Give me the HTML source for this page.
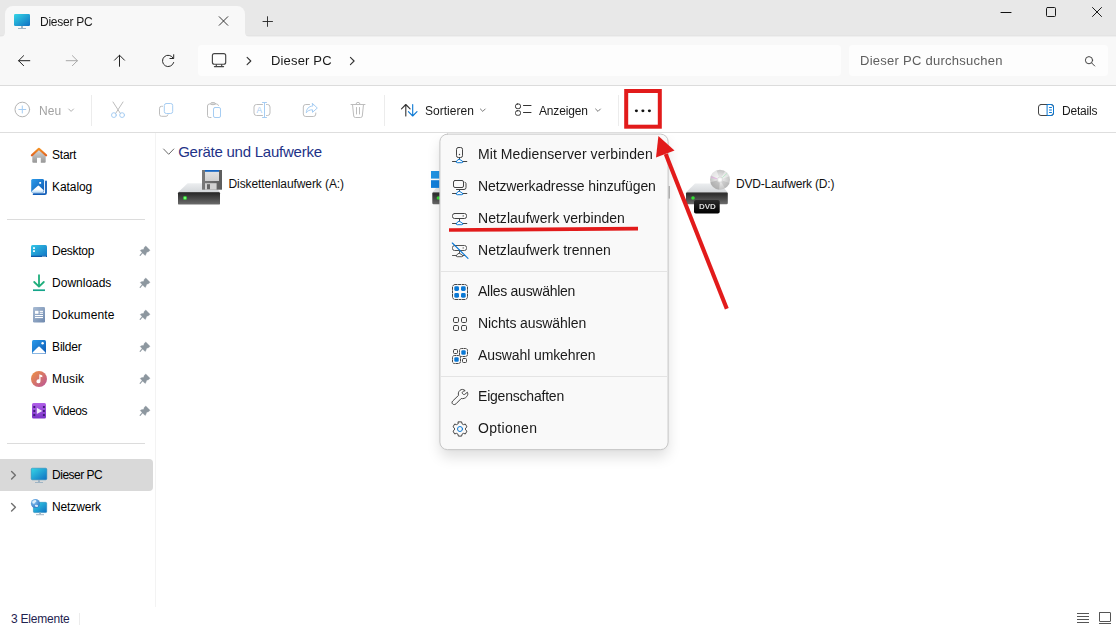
<!DOCTYPE html>
<html lang="de">
<head>
<meta charset="utf-8">
<title>Dieser PC</title>
<style>
html,body{margin:0;padding:0}
body{width:1116px;height:627px;position:relative;overflow:hidden;background:#fff;font-family:"Liberation Sans",sans-serif;color:#1b1b1b}
.a{position:absolute}
.t{position:absolute;white-space:nowrap;font-size:12px;line-height:16px;color:#1a1a1a}
svg{position:absolute;overflow:visible}
#titlebar{left:0;top:0;width:1116px;height:37px;background:linear-gradient(#e8e8e8 0,#e8e8e8 35px,#e4e4e4 35px,#e4e4e4 36px,#efefef 36px)}
#tab{left:5px;top:6px;width:240px;height:31px;background:#f8f8f8;border-radius:8px 8px 0 0}
#nav{left:0;top:37px;width:1116px;height:48px;background:#f8f8f8}
#addr{left:198px;top:45px;width:643px;height:31px;background:#fdfdfd;border-radius:4px}
#search{left:849px;top:45px;width:259px;height:31px;background:#fdfdfd;border-radius:4px}
#tb{left:0;top:85px;width:1116px;height:48px;background:#fff;border-top:1px solid #dcdcdc;border-bottom:1px solid #dedede;box-sizing:border-box}
.vsep{position:absolute;width:1px;background:#ececec}
.side{font-size:12px;color:#000}
.g{will-change:transform}
.mi{will-change:transform;font-size:14px;line-height:20px;left:478.5px;color:#1a1a1a}
#menu{left:440px;top:134px;width:228px;height:315px;box-sizing:border-box;background:#f9f9f9;border-radius:8px;box-shadow:0 8px 14px rgba(0,0,0,.13),0 1px 3px rgba(0,0,0,.05);clip-path:inset(1px -30px -30px -30px)}
.msep{position:absolute;left:440px;width:228px;height:1px;background:#e3e3e3}
</style>
</head>
<body>
<!-- TITLE BAR -->
<div class="a" id="titlebar"></div>
<div class="a" id="tab"></div>
<div class="a" id="nav"></div>
<div class="a" id="addr"></div>
<div class="a" id="search"></div>
<div class="a" id="tb"></div>
<svg width="1116" height="627" viewBox="0 0 1116 627" style="left:0;top:0" fill="none" stroke-linecap="round" stroke-linejoin="round">
<!-- tab flare corners -->
<path d="M0.500 37 L5 37 L5 32.500 A4.500 4.500 0 0 1 0.500 37Z" fill="#f8f8f8" stroke="none"/>
<path d="M249.500 37 L245 37 L245 32.500 A4.500 4.500 0 0 0 249.500 37Z" fill="#f8f8f8" stroke="none"/>
<!-- tab monitor icon -->
<defs>
<linearGradient id="gmon" x1="0" y1="0" x2="1" y2="1"><stop offset="0" stop-color="#35d6e6"/><stop offset="1" stop-color="#0f6fc2"/></linearGradient>
<linearGradient id="gdrv" x1="0" y1="0" x2="0" y2="1"><stop offset="0" stop-color="#555"/><stop offset="0.120" stop-color="#2c2c2c"/><stop offset="1" stop-color="#6c6c6c"/></linearGradient>
<linearGradient id="gdvd" x1="0" y1="0" x2="0" y2="1"><stop offset="0" stop-color="#2a2a2a"/><stop offset="1" stop-color="#000"/></linearGradient>
<linearGradient id="gtop" x1="0" y1="0" x2="0" y2="1"><stop offset="0" stop-color="#eceef0"/><stop offset="1" stop-color="#d4d7da"/></linearGradient>
</defs>
<g id="ic-mon-tab" stroke="none">
<rect x="14" y="14" width="16" height="12" rx="1.2" fill="url(#gmon)"/>
<rect x="21" y="26" width="2" height="2.2" fill="#9fb4c4"/>
<rect x="18" y="28" width="8" height="1" fill="#9fb4c4"/>
</g>
<!-- tab close, plus -->
<path d="M219.200 16.700 L227.800 25.300 M227.800 16.700 L219.200 25.300" stroke="#222" stroke-width="0.900"/>
<path d="M263 21.500 H272.500 M267.500 16.700 V26.400" stroke="#222" stroke-width="0.900"/>
<!-- window controls -->
<path d="M1001 12.500 H1011" stroke="#111" stroke-width="1.150"/>
<rect x="1046.500" y="7.500" width="9" height="9" rx="1" stroke="#1a1a1a" stroke-width="1"/>
<path d="M1092.500 7.500 L1101.500 16.500 M1101.500 7.500 L1092.500 16.500" stroke="#1a1a1a" stroke-width="1"/>
<!-- nav arrows -->
<path d="M29.800 60.700 H18.600 M23.600 55.700 L18.600 60.700 L23.600 65.700" stroke="#222" stroke-width="1"/>
<path d="M66.200 60.700 H77.400 M72.400 55.700 L77.400 60.700 L72.400 65.700" stroke="#a8a8a8" stroke-width="1"/>
<path d="M119.500 66.300 V55.200 M114.500 60.200 L119.500 55.200 L124.500 60.200" stroke="#222" stroke-width="1"/>
<!-- refresh -->
<path d="M173.300 58.300 A5.700 5.700 0 1 0 173.700 62.500" stroke="#2a2a2a" stroke-width="1"/>
<path d="M173.700 54.700 V58.500 H169.900" stroke="#2a2a2a" stroke-width="1"/>
<!-- address monitor -->
<rect x="212.400" y="53.600" width="13.300" height="10.700" rx="2" stroke="#444" stroke-width="1.150"/>
<path d="M216.300 64.500 V66.300 M221.700 64.500 V66.300 M214.400 66.600 H223.600" stroke="#444" stroke-width="1.150"/>
<!-- breadcrumb chevrons -->
<path d="M247.100 57.300 L250.800 61 L247.100 64.700" stroke="#333" stroke-width="1.100"/>
<path d="M350.400 57.300 L354.100 61 L350.400 64.700" stroke="#333" stroke-width="1.100"/>
<!-- search icon -->
<circle cx="1089" cy="60.200" r="3.600" stroke="#444" stroke-width="1"/>
<path d="M1091.600 62.900 L1094.700 66" stroke="#444" stroke-width="1"/>
<!-- TOOLBAR -->
<circle cx="22.300" cy="109.500" r="7.300" stroke="#b4b4b4" stroke-width="1"/>
<path d="M18.800 109.500 H25.800 M22.300 106 V113" stroke="#a6cdf3" stroke-width="1"/>
<path d="M68.700 109 L71.100 111.400 L73.500 109" stroke="#b0b0b0" stroke-width="1"/>
<!-- cut -->
<path d="M113 102 L120.500 113.600 M123 102 L115.500 113.600" stroke="#bdbdbd" stroke-width="1"/>
<circle cx="113.900" cy="115.100" r="2.400" stroke="#a6cdf3" stroke-width="1"/>
<circle cx="122.100" cy="115.100" r="2.400" stroke="#a6cdf3" stroke-width="1"/>
<!-- copy -->
<path d="M162.500 106.300 H161.500 A2 2 0 0 0 159.500 108.300 V114.300 A2 2 0 0 0 161.500 116.300 H166 A2 2 0 0 0 168 114.800" stroke="#bdbdbd" stroke-width="1"/>
<rect x="164.300" y="103.500" width="8.400" height="10" rx="2" stroke="#a6cdf3" stroke-width="1"/>
<!-- paste -->
<path d="M211 117.500 H209.500 A2 2 0 0 1 207.500 115.500 V106 A2 2 0 0 1 209.500 104 H216.500 A2 2 0 0 1 218.500 105.500" stroke="#bdbdbd" stroke-width="1"/>
<ellipse cx="213" cy="103.600" rx="2.600" ry="1.100" stroke="#bdbdbd" stroke-width="1"/>
<rect x="213.500" y="107.500" width="7" height="10" rx="1.500" stroke="#a6cdf3" stroke-width="1"/>
<!-- rename -->
<path d="M262.500 104.500 H256.500 A2.500 2.500 0 0 0 254 107 V113 A2.500 2.500 0 0 0 256.500 115.500 H262.500 M266.500 104.500 H267.500 A2.500 2.500 0 0 1 270 107 V113 A2.500 2.500 0 0 1 267.500 115.500 H266.500" stroke="#bdbdbd" stroke-width="1"/>
<path d="M262.500 102.500 H266.500 M262.500 117.500 H266.500 M264.500 102.500 V117.500" stroke="#a6cdf3" stroke-width="1"/>
<text x="256.600" y="113" font-size="8.500" fill="#a6cdf3" stroke="none" font-family="Liberation Sans, sans-serif">A</text>
<!-- share -->
<path d="M309.500 104.500 H305.800 A2.500 2.500 0 0 0 303.300 107 V114 A2.500 2.500 0 0 0 305.800 116.500 H313.300 A2.500 2.500 0 0 0 315.800 114 V113" stroke="#bdbdbd" stroke-width="1"/>
<path d="M312.500 103.500 L317.300 108 L312.500 112.300 V109.800 C309.500 109.800 307.500 110.800 306.300 112.800 C306.500 109 308.500 106.300 312.500 106 Z" stroke="#a6cdf3" stroke-width="1"/>
<!-- trash -->
<path d="M351 104.500 H365 M356 104.300 A2 2 0 0 1 360 104.300 M352.500 104.500 L353.700 116 A1.700 1.700 0 0 0 355.400 117.500 H360.600 A1.700 1.700 0 0 0 362.300 116 L363.500 104.500 M356.500 107.500 V114 M359.500 107.500 V114" stroke="#bdbdbd" stroke-width="1"/>
<!-- sort -->
<path d="M405.800 116 V104.500 M401.500 108.800 L405.800 104.500 L410.100 108.800" stroke="#333" stroke-width="1.100"/>
<path d="M412.700 104.500 V116 M408.400 111.700 L412.700 116 L417 111.700" stroke="#0a78d4" stroke-width="1.100"/>
<path d="M480.400 109 L482.800 111.400 L485.200 109" stroke="#777" stroke-width="1"/>
<!-- view -->
<rect x="515.500" y="104" width="5" height="4.600" rx="1.800" stroke="#333" stroke-width="1"/>
<rect x="515.500" y="110.700" width="5" height="4.600" rx="1.800" stroke="#333" stroke-width="1"/>
<path d="M523.500 105.500 H531 M523.500 112.500 H531" stroke="#333" stroke-width="1"/>
<path d="M595.600 109 L598 111.400 L600.400 109" stroke="#777" stroke-width="1"/>
<!-- dots -->
<ellipse cx="636.400" cy="110.800" rx="1.550" ry="1.350" fill="#111" stroke="none"/>
<ellipse cx="642.900" cy="110.800" rx="1.550" ry="1.350" fill="#111" stroke="none"/>
<ellipse cx="649.400" cy="110.800" rx="1.550" ry="1.350" fill="#111" stroke="none"/>
<!-- details -->
<rect x="1038.500" y="104.500" width="15" height="11" rx="2.500" stroke="#444" stroke-width="1"/>
<path d="M1047.500 104.500 H1051 A2.500 2.500 0 0 1 1053.500 107 V113 A2.500 2.500 0 0 1 1051 115.500 H1047.500 Z" stroke="#0a78d4" stroke-width="1"/>
<path d="M1049.500 107.500 H1051.500 M1049.500 110 H1051.500 M1049.500 112.500 H1051.500" stroke="#0a78d4" stroke-width="1"/>
<!-- status icons -->
<path d="M1077 613.500 H1089 M1077 616.500 H1089 M1077 619.500 H1089 M1077 622.500 H1089" stroke="#555" stroke-width="1" stroke-linecap="butt"/>
<rect x="1099.500" y="612.500" width="11" height="9" rx="0.300" stroke="#555" stroke-width="1"/>
<path d="M1099 623.500 H1111" stroke="#555" stroke-width="1" stroke-linecap="butt"/>
</svg>
<div class="vsep" style="left:91px;top:95px;height:31px"></div>
<div class="vsep" style="left:384px;top:95px;height:31px"></div>
<div class="vsep" style="left:618px;top:95px;height:31px"></div>
<div class="vsep" style="left:155px;top:133px;height:474px;background:#f3f3f3"></div>
<div class="vsep" style="left:79px;top:613px;height:12px;background:#ececec"></div>

<span class="t" id="t_status" style="left:11.00px;top:610.500px;color:#1f2350;letter-spacing:-0.222px">3 Elemente</span>

<div class="a" style="left:0;top:459px;width:153px;height:32px;background:#d9d9d9;border-radius:0 4px 4px 0"></div>
<div class="a" style="left:7px;top:219px;width:138px;height:1px;background:#dcdcdc"></div>
<div class="a" style="left:7px;top:443px;width:138px;height:1px;background:#dcdcdc"></div>
<svg width="1116" height="627" viewBox="0 0 1116 627" style="left:0;top:0" fill="none">
<defs>
<linearGradient id="ghome" gradientUnits="userSpaceOnUse" x1="0" y1="148" x2="0" y2="156"><stop offset="0" stop-color="#f69524"/><stop offset="1" stop-color="#df5f1f"/></linearGradient>
<linearGradient id="gmount" x1="0" y1="0" x2="0" y2="1"><stop offset="0" stop-color="#ffffff"/><stop offset="0.550" stop-color="#ffffff"/><stop offset="1" stop-color="#bfe0fa"/></linearGradient>
<linearGradient id="ghomeb" x1="0" y1="0" x2="0" y2="1"><stop offset="0" stop-color="#dcdcdc"/><stop offset="1" stop-color="#969696"/></linearGradient>
<linearGradient id="gblue" x1="0" y1="0" x2="1" y2="1"><stop offset="0" stop-color="#2b9bea"/><stop offset="1" stop-color="#0c59b4"/></linearGradient>
<linearGradient id="gdesk" x1="0" y1="0" x2="1" y2="1"><stop offset="0" stop-color="#33c6e6"/><stop offset="1" stop-color="#1273c4"/></linearGradient>
<linearGradient id="gdoc" x1="0" y1="0" x2="1" y2="1"><stop offset="0" stop-color="#a9bcd4"/><stop offset="1" stop-color="#6f89ae"/></linearGradient>
<linearGradient id="gmus" x1="0" y1="0" x2="1" y2="1"><stop offset="0" stop-color="#f0923f"/><stop offset="1" stop-color="#b9559a"/></linearGradient>
<radialGradient id="gglobe" cx="0.350" cy="0.300" r="0.800"><stop offset="0" stop-color="#8cc6f2"/><stop offset="1" stop-color="#2a72c2"/></radialGradient>
<linearGradient id="gvid" x1="0" y1="0" x2="0" y2="1"><stop offset="0" stop-color="#b160e8"/><stop offset="1" stop-color="#7a34c8"/></linearGradient>
</defs>
<!-- home -->
<path d="M32.300 155 L39 148.800 L45.700 155 V161.800 A1 1 0 0 1 44.700 162.800 H40.800 V157.700 H37 V162.800 H33.300 A1 1 0 0 1 32.300 161.800 Z" fill="url(#ghomeb)"/>
<path d="M31.900 155.300 L38.900 148.800 L46.100 155.300" stroke="url(#ghome)" stroke-width="2.200" stroke-linecap="round" stroke-linejoin="round"/>
<!-- katalog -->
<path d="M46 181.400 V193 A1.200 1.200 0 0 1 44.800 194.200 H33.600" stroke="#0f5cb8" stroke-width="1.800" stroke-linecap="round"/>
<rect x="31.200" y="179" width="12.900" height="13.400" rx="1.500" fill="url(#gblue)"/>
<path d="M31.700 191.300 L37.600 185.900 Q38.400 185.300 39.200 185.900 L43.700 190.200 V191 A1.400 1.400 0 0 1 42.300 192.400 H33 A1.400 1.400 0 0 1 31.700 191.300 Z" fill="url(#gmount)"/>
<rect x="39.300" y="182" width="1.800" height="1.800" fill="#fff"/>
<!-- desktop -->
<rect x="31" y="245" width="16" height="12" rx="1.500" fill="url(#gdesk)"/>
<rect x="33" y="247.300" width="2" height="1.600" fill="#fff"/><rect x="33" y="250.300" width="2" height="1.600" fill="#fff"/>
<rect x="31" y="255.700" width="16" height="1.300" fill="#0e5aa8"/>
<rect x="42.500" y="255.900" width="1" height="0.900" fill="#fff"/><rect x="44.500" y="255.900" width="1" height="0.900" fill="#fff"/>
<!-- downloads -->
<path d="M39 275.200 V286.500 M34.200 282 L39 286.700 L43.800 282" stroke="#1fae7c" stroke-width="1.800" stroke-linecap="round" stroke-linejoin="round"/>
<path d="M33 290.200 H45" stroke="#15a58a" stroke-width="1.700" stroke-linecap="butt"/>
<!-- dokumente -->
<rect x="33" y="307" width="12" height="15.600" rx="1.300" fill="url(#gdoc)"/>
<rect x="35" y="310.800" width="3.500" height="3" fill="#fff"/><rect x="39.700" y="310.800" width="3.300" height="1.100" fill="#fff"/><rect x="39.700" y="312.700" width="3.300" height="1.100" fill="#fff"/>
<rect x="35" y="315" width="8" height="1.100" fill="#fff"/><rect x="35" y="317" width="8" height="1.100" fill="#fff"/>
<!-- bilder -->
<rect x="32" y="340" width="14" height="14" rx="1.500" fill="url(#gblue)"/>
<path d="M32.500 352.500 L38.300 346.700 Q39 346.200 39.700 346.700 L45.500 352.500 A1.500 1.500 0 0 1 44.500 353.500 H33.500 A1.500 1.500 0 0 1 32.500 352.500 Z" fill="#fff"/>
<circle cx="42.600" cy="343.300" r="1.200" fill="#fff"/>
<!-- musik -->
<circle cx="39" cy="379" r="8" fill="url(#gmus)"/>
<path d="M39.300 374.300 L42.300 375.500 V377.300 L40.500 376.700 V381.300 A2 2 0 1 1 39.300 379.500 Z" fill="#fff"/>
<!-- videos -->
<rect x="32" y="403" width="14" height="15.600" rx="1.500" fill="url(#gvid)"/>
<path d="M36.800 407.700 L42.300 410.900 L36.800 414.100 Z" fill="#f1e9fb"/>
<g fill="#3f1c78"><rect x="33.3" y="405.9" width="2" height="2" rx="0.300"/><rect x="33.3" y="409.9" width="2" height="2" rx="0.300"/><rect x="33.3" y="414" width="2" height="2" rx="0.300"/><rect x="42.9" y="405.9" width="2" height="2" rx="0.300"/><rect x="42.9" y="409.9" width="2" height="2" rx="0.300"/><rect x="42.9" y="414" width="2" height="2" rx="0.300"/></g>
<!-- dieser pc -->
<rect x="31.200" y="468.200" width="15.600" height="11.600" rx="1.200" fill="url(#gmon)" stroke="#1a80b4" stroke-width="0.500"/>
<rect x="38" y="480" width="2" height="2.200" fill="#9fb4c4"/><rect x="35" y="482" width="8" height="1" fill="#9fb4c4"/>
<!-- netzwerk -->
<rect x="33.400" y="502.300" width="13.300" height="10.300" rx="1.200" fill="url(#gmon)" stroke="#1a80b4" stroke-width="0.500"/>
<rect x="39.200" y="512.600" width="1.800" height="1.800" fill="#9fb4c4"/><rect x="36" y="514.200" width="8" height="1" fill="#9fb4c4"/>
<circle cx="35.400" cy="503.500" r="4.500" fill="url(#gglobe)"/>
<path d="M32.300 501.500 Q33.500 499.800 35.500 500 Q37 500.800 36 502 Q34.800 502.300 34.500 503.500 Q33.500 504 32.300 503 Z" fill="#e8f3fc" opacity="0.900"/>
<path d="M35 505 Q36.500 504.300 38 505.200 Q38.500 506.300 37.300 507 Q35.800 507.200 35 506.300 Z" fill="#e8f3fc" opacity="0.900"/>
<!-- chevrons -->
<path d="M11.600 471.500 L15.400 475.300 L11.600 479.100" stroke="#707070" stroke-width="1.400" stroke-linecap="round" stroke-linejoin="round"/>
<path d="M11.600 503.500 L15.400 507.300 L11.600 511.100" stroke="#707070" stroke-width="1.400" stroke-linecap="round" stroke-linejoin="round"/>
<path d="M145.800 245.900 L150.000 250.200 L148.900 251.500 L146.800 252.300 L145.400 255.500 L144.300 254.800 L140.200 250.500 L141.200 249.800 L143.700 249.200 L144.300 247.300 Z M142.900 252.800 L140.200 255.900 L139.700 255.300 L142.300 252.300 Z" fill="#8d979f" stroke="#8d979f" stroke-width="0.300" stroke-linejoin="round"/>
<path d="M145.800 277.900 L150.000 282.200 L148.900 283.500 L146.800 284.300 L145.400 287.500 L144.300 286.800 L140.200 282.500 L141.200 281.800 L143.700 281.200 L144.300 279.300 Z M142.900 284.800 L140.200 287.900 L139.700 287.300 L142.300 284.300 Z" fill="#8d979f" stroke="#8d979f" stroke-width="0.300" stroke-linejoin="round"/>
<path d="M145.800 309.900 L150.000 314.200 L148.900 315.500 L146.800 316.300 L145.400 319.500 L144.300 318.800 L140.200 314.500 L141.200 313.800 L143.700 313.200 L144.300 311.300 Z M142.900 316.800 L140.200 319.900 L139.700 319.300 L142.300 316.300 Z" fill="#8d979f" stroke="#8d979f" stroke-width="0.300" stroke-linejoin="round"/>
<path d="M145.800 341.900 L150.000 346.200 L148.900 347.500 L146.800 348.300 L145.400 351.500 L144.300 350.800 L140.200 346.500 L141.200 345.800 L143.700 345.200 L144.300 343.300 Z M142.900 348.800 L140.200 351.900 L139.700 351.300 L142.300 348.300 Z" fill="#8d979f" stroke="#8d979f" stroke-width="0.300" stroke-linejoin="round"/>
<path d="M145.800 373.900 L150.000 378.200 L148.900 379.500 L146.800 380.300 L145.400 383.500 L144.300 382.800 L140.200 378.500 L141.200 377.800 L143.700 377.200 L144.300 375.300 Z M142.900 380.800 L140.200 383.900 L139.700 383.300 L142.300 380.300 Z" fill="#8d979f" stroke="#8d979f" stroke-width="0.300" stroke-linejoin="round"/>
<path d="M145.800 405.900 L150.000 410.200 L148.900 411.500 L146.800 412.300 L145.400 415.500 L144.300 414.800 L140.200 410.500 L141.200 409.800 L143.700 409.200 L144.300 407.300 Z M142.900 412.800 L140.200 415.900 L139.700 415.300 L142.300 412.300 Z" fill="#8d979f" stroke="#8d979f" stroke-width="0.300" stroke-linejoin="round"/>
</svg>
<span class="t side" id="s0" style="left:52.10px;top:146.5px;letter-spacing:-0.275px">Start</span>
<span class="t side" id="s1" style="left:52.10px;top:178.5px;letter-spacing:-0.083px">Katalog</span>
<span class="t side" id="s2" style="left:52.10px;top:242.5px;letter-spacing:-0.283px">Desktop</span>
<span class="t side" id="s3" style="left:52.10px;top:274.5px;letter-spacing:-0.012px">Downloads</span>
<span class="t side" id="s4" style="left:52.10px;top:306.5px;letter-spacing:0.113px">Dokumente</span>
<span class="t side" id="s5" style="left:52.10px;top:338.5px;letter-spacing:-0.220px">Bilder</span>
<span class="t side" id="s6" style="left:52.10px;top:370.5px;letter-spacing:0.150px">Musik</span>
<span class="t side" id="s7" style="left:53.10px;top:402.5px;letter-spacing:-0.420px">Videos</span>
<span class="t side" id="s8" style="left:52.10px;top:466.5px;letter-spacing:-0.513px">Dieser PC</span>
<span class="t side" id="s9" style="left:52.10px;top:498.5px;letter-spacing:-0.158px">Netzwerk</span>

<svg width="1116" height="627" viewBox="0 0 1116 627" style="left:0;top:0" fill="none">
<defs>
<radialGradient id="gdisc" cx="0.5" cy="0.5" r="0.5"><stop offset="0" stop-color="#f4f4f4"/><stop offset="0.25" stop-color="#e9e9e9"/><stop offset="1" stop-color="#c4c4c4"/></radialGradient>
<linearGradient id="gflop" x1="0" y1="0" x2="1" y2="0"><stop offset="0" stop-color="#7a7a7a"/><stop offset="1" stop-color="#5c5c5c"/></linearGradient>
<linearGradient id="glabel" x1="0" y1="0" x2="0" y2="1"><stop offset="0" stop-color="#e6e6e6"/><stop offset="1" stop-color="#cfcfcf"/></linearGradient>
</defs>
<!-- group chevron -->
<path d="M163.600 149 L168.700 154.300 L173.800 149" stroke="#6a6a6a" stroke-width="1" stroke-linecap="round" stroke-linejoin="round"/>
<!-- floppy drive -->
<path d="M187.600 183.200 H213 L220 192.200 H178.200 Z" fill="url(#gtop)"/>
<rect x="178" y="192" width="42" height="12.600" rx="1.200" fill="url(#gdrv)"/>
<circle cx="185" cy="198" r="2" fill="#35dd35"/><circle cx="185" cy="198" r="1" fill="#8dff8d"/>
<rect x="202" y="170" width="20" height="19.700" fill="url(#gflop)"/>
<rect x="205" y="170" width="14" height="11" fill="url(#glabel)"/>
<rect x="205" y="170" width="14" height="1.800" fill="#1766c2"/>
<rect x="205" y="183.200" width="11.600" height="6.500" fill="#d2d2d2"/>
<rect x="207" y="184.200" width="3" height="5" fill="#666"/>
<!-- C: drive partially hidden -->
<rect x="431" y="171" width="8.500" height="7.600" fill="#1f93e4"/>
<rect x="431" y="180.200" width="8.500" height="7.700" fill="#1280dc"/>
<path d="M432.300 192.400 L436 188 H440 V192.400 Z" fill="#e4e6e8"/>
<rect x="432.300" y="192.300" width="9" height="12" rx="1.200" fill="url(#gdrv)"/>
<circle cx="438.400" cy="198" r="1.800" fill="#35dd35"/>
<rect x="668.300" y="186" width="1.600" height="12.600" fill="#b2b2b2"/>
<!-- DVD drive -->
<path d="M695 183.400 H720 L727.600 192.300 H686.200 Z" fill="url(#gtop)"/>
<rect x="686" y="192.200" width="41.800" height="12" rx="1.200" fill="url(#gdrv)"/>
<circle cx="720" cy="179.700" r="10" fill="url(#gdisc)"/>
<path d="M720 179.7 L719.13 189.66 A10 10 0 0 1 710.34 182.29 Z" fill="#8e8e8e" opacity="0.400"/>
<path d="M720 179.7 L729.40 183.12 A10 10 0 0 1 725.00 188.36 Z" fill="#9a9a9a" opacity="0.300"/>
<path d="M720 179.7 L710.94 175.47 A10 10 0 0 1 716.58 170.30 Z" fill="#ffffff" opacity="0.500"/>
<path d="M720 179.7 L725.00 171.04 A10 10 0 0 1 729.40 176.28 Z" fill="#ffffff" opacity="0.450"/>
<path d="M717.13 178.82 L710.92 176.92" stroke="#e7a3e4" stroke-width="0.700"/>
<path d="M722.23 177.69 L727.06 173.34" stroke="#a9e8bb" stroke-width="0.700"/>
<circle cx="720" cy="179.700" r="2.700" fill="#f4f4f4" stroke="#c9c9c9" stroke-width="0.500"/>
<circle cx="720" cy="179.700" r="1.200" fill="#fdfdfd"/>
<circle cx="693" cy="198" r="1.800" fill="#35dd35"/>
<rect x="694" y="200" width="25.700" height="13.500" rx="1.800" fill="url(#gdvd)"/>
</svg>
<span class="t" id="c_head" style="left:178.20px;top:142px;font-size:15px;line-height:20px;color:#1e3287;letter-spacing:-0.242px">Geräte und Laufwerke</span>
<span class="t" id="c_a" style="left:228.50px;top:175.500px;color:#111;letter-spacing:-0.085px">Diskettenlaufwerk (A:)</span>
<span class="t" id="c_d" style="left:736.00px;top:175.500px;color:#111;letter-spacing:-0.181px">DVD-Laufwerk (D:)</span>

<span class="t g" id="t_tab" style="left:39.80px;top:14px;letter-spacing:-0.240px">Dieser PC</span>
<span class="t g" id="t_addr" style="left:271.20px;top:51px;font-size:13px;line-height:20px;letter-spacing:0.163px">Dieser PC</span>
<span class="t g" id="t_search" style="left:860.10px;top:51px;font-size:13px;line-height:20px;color:#5e5e5e;letter-spacing:0.265px">Dieser PC durchsuchen</span>
<span class="t g" id="t_neu" style="left:38.80px;top:103px;color:#a2a2a2;letter-spacing:0.050px">Neu</span>
<span class="t g" id="t_sort" style="left:424.60px;top:103px;letter-spacing:0.025px">Sortieren</span>
<span class="t g" id="t_view" style="left:539.40px;top:103px;letter-spacing:-0.171px">Anzeigen</span>
<span class="t g" id="t_det" style="left:1062.20px;top:103px;letter-spacing:-0.183px">Details</span>
<span class="t g" id="t_dvd" style="left:699.10px;top:202.40px;font-size:8px;font-weight:bold;line-height:10px;color:#dcdcdc;letter-spacing:-0.100px">DVD</span>
<div class="a" id="menu"></div>
<svg width="1116" height="627" viewBox="0 0 1116 627" style="left:0;top:0" fill="none" stroke-linecap="round" stroke-linejoin="round">
<rect x="439.900" y="134.100" width="228.200" height="315.500" rx="7.500" fill="#f9f9f9" stroke="#c6c6c6" stroke-width="1"/>
<path d="M440.400 271.500 H667.600 M440.400 376.500 H667.600" stroke="#e4e4e4" stroke-width="1" stroke-linecap="butt"/>
<!-- 1 media server -->
<rect x="456.500" y="147.500" width="6" height="10" rx="1.800" stroke="#444" stroke-width="1"/>
<circle cx="459.500" cy="154.500" r="0.700" fill="#444"/>
<path d="M459.500 157.500 V159.300 M452.500 161.500 H456.300 M462.700 161.500 H466.800" stroke="#444" stroke-width="1"/>
<path d="M459.500 159.300 L462.600 161.300 Q463.300 162.700 461.800 162.700 H457.200 Q455.700 162.700 456.400 161.300 Z" stroke="#0a78d4" stroke-width="1"/>
<!-- 2 network address -->
<rect x="453.500" y="180.500" width="10" height="7" rx="1.500" stroke="#444" stroke-width="1"/>
<path d="M465 182.300 Q466 182.500 466 183.500 V187.500 A2 2 0 0 1 464 189.500 H456.500" stroke="#444" stroke-width="1"/>
<path d="M459.500 189.500 V191.300 M452.500 193.500 H456.300 M462.700 193.500 H466.800" stroke="#444" stroke-width="1"/>
<path d="M459.500 191.300 L462.600 193.300 Q463.300 194.700 461.800 194.700 H457.200 Q455.700 194.700 456.400 193.300 Z" stroke="#0a78d4" stroke-width="1"/>
<!-- 3 map drive -->
<rect x="452.500" y="213.500" width="14" height="5" rx="2" stroke="#444" stroke-width="1"/>
<circle cx="463.200" cy="215.900" r="0.700" fill="#444"/>
<path d="M459.500 218.500 V221.300 M452.500 223.500 H456.300 M462.700 223.500 H466.800" stroke="#444" stroke-width="1"/>
<path d="M459.500 221.300 L462.600 223.300 Q463.300 224.700 461.800 224.700 H457.200 Q455.700 224.700 456.400 223.300 Z" stroke="#0a78d4" stroke-width="1"/>
<!-- 4 disconnect drive -->
<rect x="452.500" y="245.500" width="14" height="5" rx="2" stroke="#555" stroke-width="1"/>
<circle cx="463.200" cy="247.900" r="0.700" fill="#555"/>
<path d="M459.500 250.500 V253.300 M452.500 255.500 H456.300 M462.700 255.500 H464.500" stroke="#555" stroke-width="1"/>
<path d="M459.500 253.300 L462.600 255.300 Q463.300 256.700 461.800 256.700 H457.200 Q455.700 256.700 456.400 255.300 Z" stroke="#555" stroke-width="1"/>
<path d="M452.300 243 L468 258.300" stroke="#0a78d4" stroke-width="1.100"/>
<!-- 5 select all -->
<rect x="452.500" y="284.500" width="15" height="15" rx="2.500" stroke="#444" stroke-width="1" stroke-dasharray="2.200 1.300"/>
<g fill="#0a78d4"><rect x="454.300" y="286.300" width="4.700" height="4.700" rx="1.400"/><rect x="461" y="286.300" width="4.700" height="4.700" rx="1.400"/><rect x="454.300" y="293" width="4.700" height="4.700" rx="1.400"/><rect x="461" y="293" width="4.700" height="4.700" rx="1.400"/></g>
<!-- 6 select none -->
<g stroke="#444" stroke-width="1"><rect x="453.500" y="317.500" width="5" height="5" rx="1.200"/><rect x="461.500" y="317.500" width="5" height="5" rx="1.200"/><rect x="453.500" y="325.500" width="5" height="5" rx="1.200"/><rect x="461.500" y="325.500" width="5" height="5" rx="1.200"/></g>
<!-- 7 invert -->
<g stroke="#444" stroke-width="1"><rect x="453.500" y="349.500" width="4" height="4" rx="1"/><rect x="462.500" y="358.500" width="4" height="4" rx="1"/>
<rect x="459.500" y="348.500" width="8" height="8" rx="1.800" stroke-dasharray="1.800 1.200"/><rect x="452.500" y="355.500" width="8" height="8" rx="1.800" stroke-dasharray="1.800 1.200"/></g>
<g fill="#0a78d4"><rect x="461.300" y="350.300" width="4.400" height="4.400" rx="1.200"/><rect x="454.300" y="357.300" width="4.400" height="4.400" rx="1.200"/></g>
<!-- 8 wrench -->
<path d="M464.900 390.400 C463.500 389 461.300 389.100 459.900 390.400 C458.300 391.800 458 393.800 458.600 395.300 L452.700 401 C451.600 402.200 452 403.500 452.700 404 C453.600 404.800 455 404.800 456 403.800 L461.200 398.500 C463 399 465.500 398.300 466.800 396.500 C468 395 468.100 393.500 467.300 392.200 L464.900 394.300 C464 394.800 462.900 394.400 462.400 393.400 C462 392.600 462.300 391.900 462.900 391.500 Z" stroke="#444" stroke-width="1"/>
<!-- 9 gear -->
<path id="gear" d="M458.36 421.89 L461.64 421.89 L462.01 423.77 L463.52 424.65 L465.34 424.02 L466.98 426.87 L465.53 428.12 L465.53 429.88 L466.98 431.13 L465.34 433.98 L463.52 433.35 L462.01 434.23 L461.64 436.11 L458.36 436.11 L457.99 434.23 L456.48 433.35 L454.66 433.98 L453.02 431.13 L454.47 429.88 L454.47 428.12 L453.02 426.87 L454.66 424.02 L456.48 424.65 L457.99 423.77 Z" stroke="#444" stroke-width="1"/>
<circle cx="460" cy="429" r="2.500" stroke="#0a78d4" stroke-width="1"/>
</svg>
<span class="t mi" id="m0" style="left:478.30px;top:144px;letter-spacing:0.080px">Mit Medienserver verbinden</span>
<span class="t mi" id="m1" style="left:478.30px;top:176px;letter-spacing:-0.108px">Netzwerkadresse hinzufügen</span>
<span class="t mi" id="m2" style="left:478.30px;top:208px;letter-spacing:0.029px">Netzlaufwerk verbinden</span>
<span class="t mi" id="m3" style="left:478.30px;top:240px;letter-spacing:0.026px">Netzlaufwerk trennen</span>
<span class="t mi" id="m4" style="left:478.30px;top:281px;letter-spacing:-0.272px">Alles auswählen</span>
<span class="t mi" id="m5" style="left:478.30px;top:313px;letter-spacing:-0.100px">Nichts auswählen</span>
<span class="t mi" id="m6" style="left:478.30px;top:345px;letter-spacing:-0.106px">Auswahl umkehren</span>
<span class="t mi" id="m7" style="left:478.30px;top:386px;letter-spacing:-0.208px">Eigenschaften</span>
<span class="t mi" id="m8" style="left:478.30px;top:418px;letter-spacing:0.301px">Optionen</span>

<svg width="1116" height="627" viewBox="0 0 1116 627" style="left:0;top:0" fill="none">
<rect x="626.200" y="91" width="33.600" height="35.700" stroke="#e21b1b" stroke-width="4"/>
<path d="M449 230 L638 228.600" stroke="#e21b1b" stroke-width="3.700" stroke-linecap="butt"/>
<path d="M726.800 308.800 L665.700 154" stroke="#e21b1b" stroke-width="4.100" stroke-linecap="butt"/>
<path d="M658.400 136 L674.500 150.600 L656 157.500 Z" fill="#e21b1b"/>
</svg>

</body>
</html>
